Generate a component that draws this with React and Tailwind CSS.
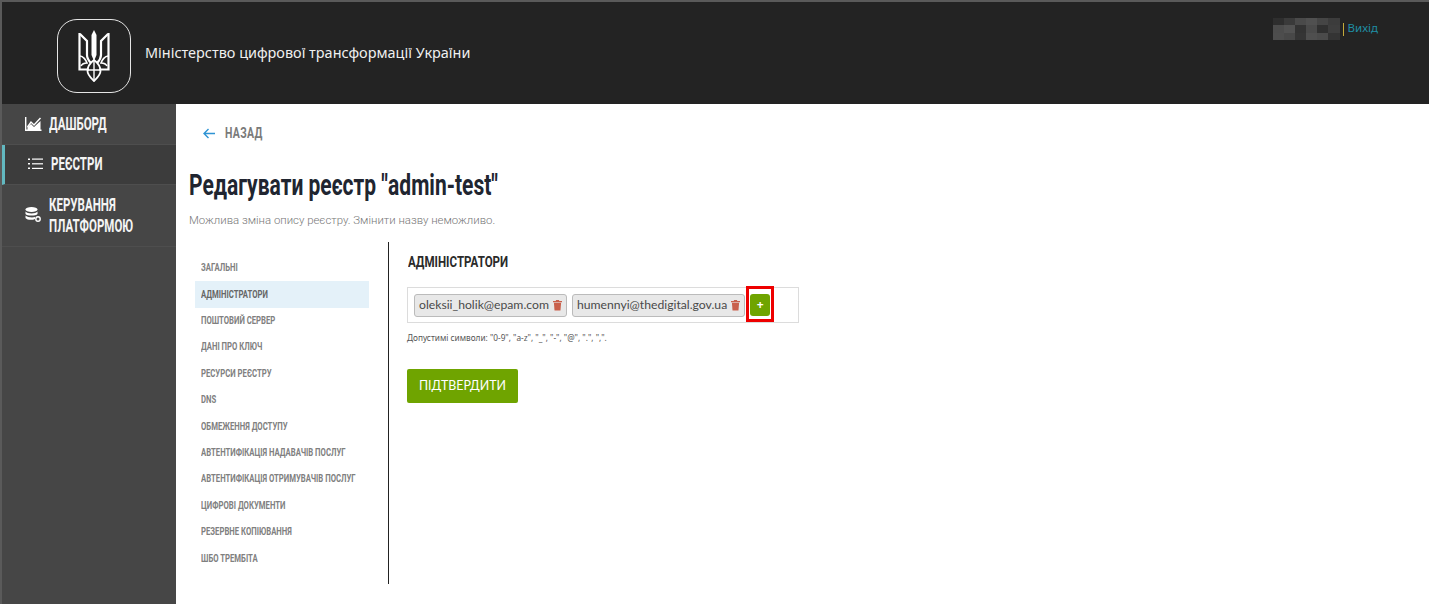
import React from "react";

const items = ["ЗАГАЛЬНІ","АДМІНІСТРАТОРИ","ПОШТОВИЙ СЕРВЕР","ДАНІ ПРО КЛЮЧ","РЕСУРСИ РЕЄСТРУ","DNS","ОБМЕЖЕННЯ ДОСТУПУ","АВТЕНТИФІКАЦІЯ НАДАВАЧІВ ПОСЛУГ","АВТЕНТИФІКАЦІЯ ОТРИМУВАЧІВ ПОСЛУГ","ЦИФРОВІ ДОКУМЕНТИ","РЕЗЕРВНЕ КОПІЮВАННЯ","ШБО ТРЕМБІТА"];
const mosaic = ["#2e2e2e","#3a3a3a","#4a4a4a","#505050","#454545","#3c3c3c","#4c4c4c","#525252","#333333","#4a4a4a","#303030","#3e3e3e","#4d4d4d","#484848","#353535","#4f4f4f","#4b4b4b","#343434"];

function Trident() {
  return (
    <svg width="32" height="52" viewBox="0 0 32 52" fill="none" stroke="white" strokeWidth="2.2">
      <path d="M16 0 L18.5 5 V25 L16 31 L13.5 25 V5 Z" fill="white" stroke="none" />
      <path d="M2 4 L9 11 V25 C9 29 11 31 13 33 M30 4 L23 11 V25 C23 29 21 31 19 33" />
      <path d="M1.5 3 V39.5 H11 M30.5 3 V39.5 H21" />
      <path d="M2 26 C5 26 8 30 9 33 C6 33 4 34 3 36 M30 26 C27 26 24 30 23 33 C26 33 28 34 29 36" strokeWidth="1.6" />
      <path d="M16 30 C12 33 9.5 37 9.5 41 C9.5 45 13 48 16 51 C19 48 22.5 45 22.5 41 C22.5 37 20 33 16 30 Z" strokeWidth="1.8" />
      <path d="M16 31 V50 M10 40 H22" strokeWidth="1.4" />
    </svg>
  );
}

function Tag({ text }) {
  return (
    <div className="flex h-[23px] shrink-0 items-center gap-[4px] whitespace-nowrap rounded-[3px] border border-[#bbb] bg-[#e8e8e8] pl-1 pr-[4px] text-[12.2px] text-[#4a4a4a] font-['Lato',sans-serif]">
      <span>{text}</span>
      <svg width="9" height="12" viewBox="0 0 10 12" fill="#c9604c"><path d="M0 1.5H3.2V0.5H6.8V1.5H10V3H0Z" /><path d="M1 3.5H9L8.3 12H1.7Z" /></svg>
    </div>
  );
}

function Side({ icon, children, active, h }) {
  return (
    <div className={"flex items-center border-b border-[#4e4e4e] pb-[2px] pl-[23px] " + h + (active ? " border-l-[3px] border-l-[#62b8c0] bg-[#3c3c3c]" : "")}>
      <span className={"flex shrink-0 " + (active ? "w-[23px]" : "w-[24px]")}>{icon}</span>
      <span className="origin-left scale-x-[0.64] whitespace-nowrap font-['Roboto',sans-serif] text-[18px] font-bold leading-[21px] text-[#f4f4f4]">{children}</span>
    </div>
  );
}

export default function App() {
  return (
    <div className="flex h-[604px] w-[1429px] flex-col overflow-hidden border-l-2 border-t-2 border-[#5a5a5a] bg-white">
      <header className="flex h-[102px] shrink-0 justify-between bg-[#232323]">
        <div className="flex items-start pl-[55px] pt-[17px]">
          <div className="flex h-[74px] w-[74px] items-center justify-center rounded-[20px] border border-[#e5e5e5]"><Trident /></div>
          <span className="ml-[14px] mt-[24px] text-[14.45px] leading-5 text-[#f0f0f0] font-['Noto_Sans',sans-serif]">Міністерство цифрової трансформації України</span>
        </div>
        <div className="mr-[51px] mt-[16px] flex h-[22px] items-center text-[11.5px] font-['Noto_Sans',sans-serif]">
          <div className="grid h-[22px] w-[67px] grid-cols-6 grid-rows-3">
            {mosaic.map((c, i) => <div key={i} style={{ backgroundColor: c }} />)}
          </div>
          <span className="ml-[3px] h-[13px] w-px bg-[#c4a93a]" />
          <span className="ml-1 -translate-y-px text-[#1f8ea3]">Вихід</span>
        </div>
      </header>
      <div className="flex min-h-0 flex-1">
        <aside className="w-[174px] shrink-0 bg-[#464646]">
          <Side h="h-[41px]" icon={<svg width="17" height="15" viewBox="0 0 17 15" fill="none" stroke="white" strokeWidth="1.4"><path d="M0.7 1V14.3H16.5" /><path d="M2.5 11L6 6L9 9L15.5 2" /><path d="M2.5 14V11L6 8L9 11L15.5 5V14Z" fill="white" stroke="none" /></svg>}>ДАШБОРД</Side>
          <Side active h="h-[40px]" icon={<svg width="15" height="12" viewBox="0 0 15 12" fill="white"><rect x="0" y="0.5" width="2" height="1.5"/><rect x="4" y="0.5" width="11" height="1.2"/><rect x="0" y="5" width="2" height="1.5"/><rect x="4" y="5.2" width="11" height="1.2"/><rect x="0" y="9.5" width="2" height="1.5"/><rect x="4" y="9.8" width="11" height="1.2"/></svg>}>РЕЄСТРИ</Side>
          <Side h="h-[62px]" icon={<svg width="16" height="15" viewBox="0 0 16 15" fill="white"><ellipse cx="6.5" cy="2.5" rx="6" ry="2.5"/><path d="M0.5 4.5C2 7 11 7 12.5 4.5V7C11 9 2 9 0.5 7Z"/><path d="M0.5 8.5C2 10.5 8 11 10 10V12C7 13.5 2 13 0.5 11Z"/><circle cx="13" cy="12" r="2.2" fill="none" stroke="white" strokeWidth="1.4"/></svg>}>КЕРУВАННЯ<br />ПЛАТФОРМОЮ</Side>
        </aside>
        <main className="min-w-0 flex-1 pl-[13px]">
          <div className="ml-[14px] mt-[19px] flex h-5 items-center gap-[9px]">
            <svg width="13" height="11" viewBox="0 0 13 11" fill="none" stroke="#2f94d4" strokeWidth="1.4"><path d="M12 5.5H1M5.5 1L1 5.5L5.5 10" /></svg>
            <span className="origin-left scale-x-[0.7] font-['Roboto',sans-serif] text-[15px] font-bold tracking-[0.5px] text-[#7a7a7a]">НАЗАД</span>
          </div>
          <h1 className="mt-[23px] origin-left scale-x-[0.725] whitespace-nowrap font-['Roboto',sans-serif] text-[29px] font-bold leading-[38px] text-[#202530]">Редагувати реєстр "admin-test"</h1>
          <p className="mt-[8px] whitespace-nowrap text-[11.4px] font-light leading-4 text-[#777] font-['Roboto',sans-serif]">Можлива зміна опису реєстру. Змінити назву неможливо.</p>
          <div className="mt-[14px] flex">
            <nav className="h-[342px] w-[200px] shrink-0 border-r border-[#222] pl-[6px] pt-[13px]">
              {items.map((t, i) => (
                <div key={t} className={"flex h-[26.4px] w-[174px] items-center pl-[6px] " + (i === 1 ? "bg-[#e4f1f9]" : "")}>
                  <span className={"origin-left scale-x-[0.735] whitespace-nowrap font-['Roboto',sans-serif] text-[10.5px] font-bold " + (i === 1 ? "text-[#666]" : "text-[#808080]")}>{t}</span>
                </div>
              ))}
            </nav>
            <section className="ml-[18px]">
              <h2 className="ml-px mt-[10px] origin-left scale-x-[0.77] whitespace-nowrap font-['Roboto',sans-serif] text-[15px] font-bold leading-5 text-[#2a2a2a]">АДМІНІСТРАТОРИ</h2>
              <div className="mt-[15px] flex h-[36px] w-[392px] items-center gap-[5px] border border-[#dcdcdc] pl-[6px]">
                <Tag text="oleksii_holik@epam.com" />
                <Tag text="humennyi@thedigital.gov.ua" />
                <div className="relative flex h-[22px] w-[20px] shrink-0 items-center justify-center rounded-[3px] bg-[#6fa400] text-xs font-bold text-white">
                  +
                  <div className="absolute -left-[4px] -top-[8px] h-[36px] w-[28px] border-[3.5px] border-[#ee0000]" />
                </div>
              </div>
              <p className="mt-[9px] whitespace-nowrap text-[8.25px] leading-3 text-[#555] font-['Noto_Sans',sans-serif]">Допустимі символи: "0-9", "a-z", "_", "-", "@", ".", ",".</p>
              <button className="mt-[25px] flex h-[34px] w-[111px] items-center justify-center rounded-[2px] bg-[#6fa400] text-[12.4px] text-white font-['Lato',sans-serif]">ПІДТВЕРДИТИ</button>
            </section>
          </div>
        </main>
      </div>
    </div>
  );
}
